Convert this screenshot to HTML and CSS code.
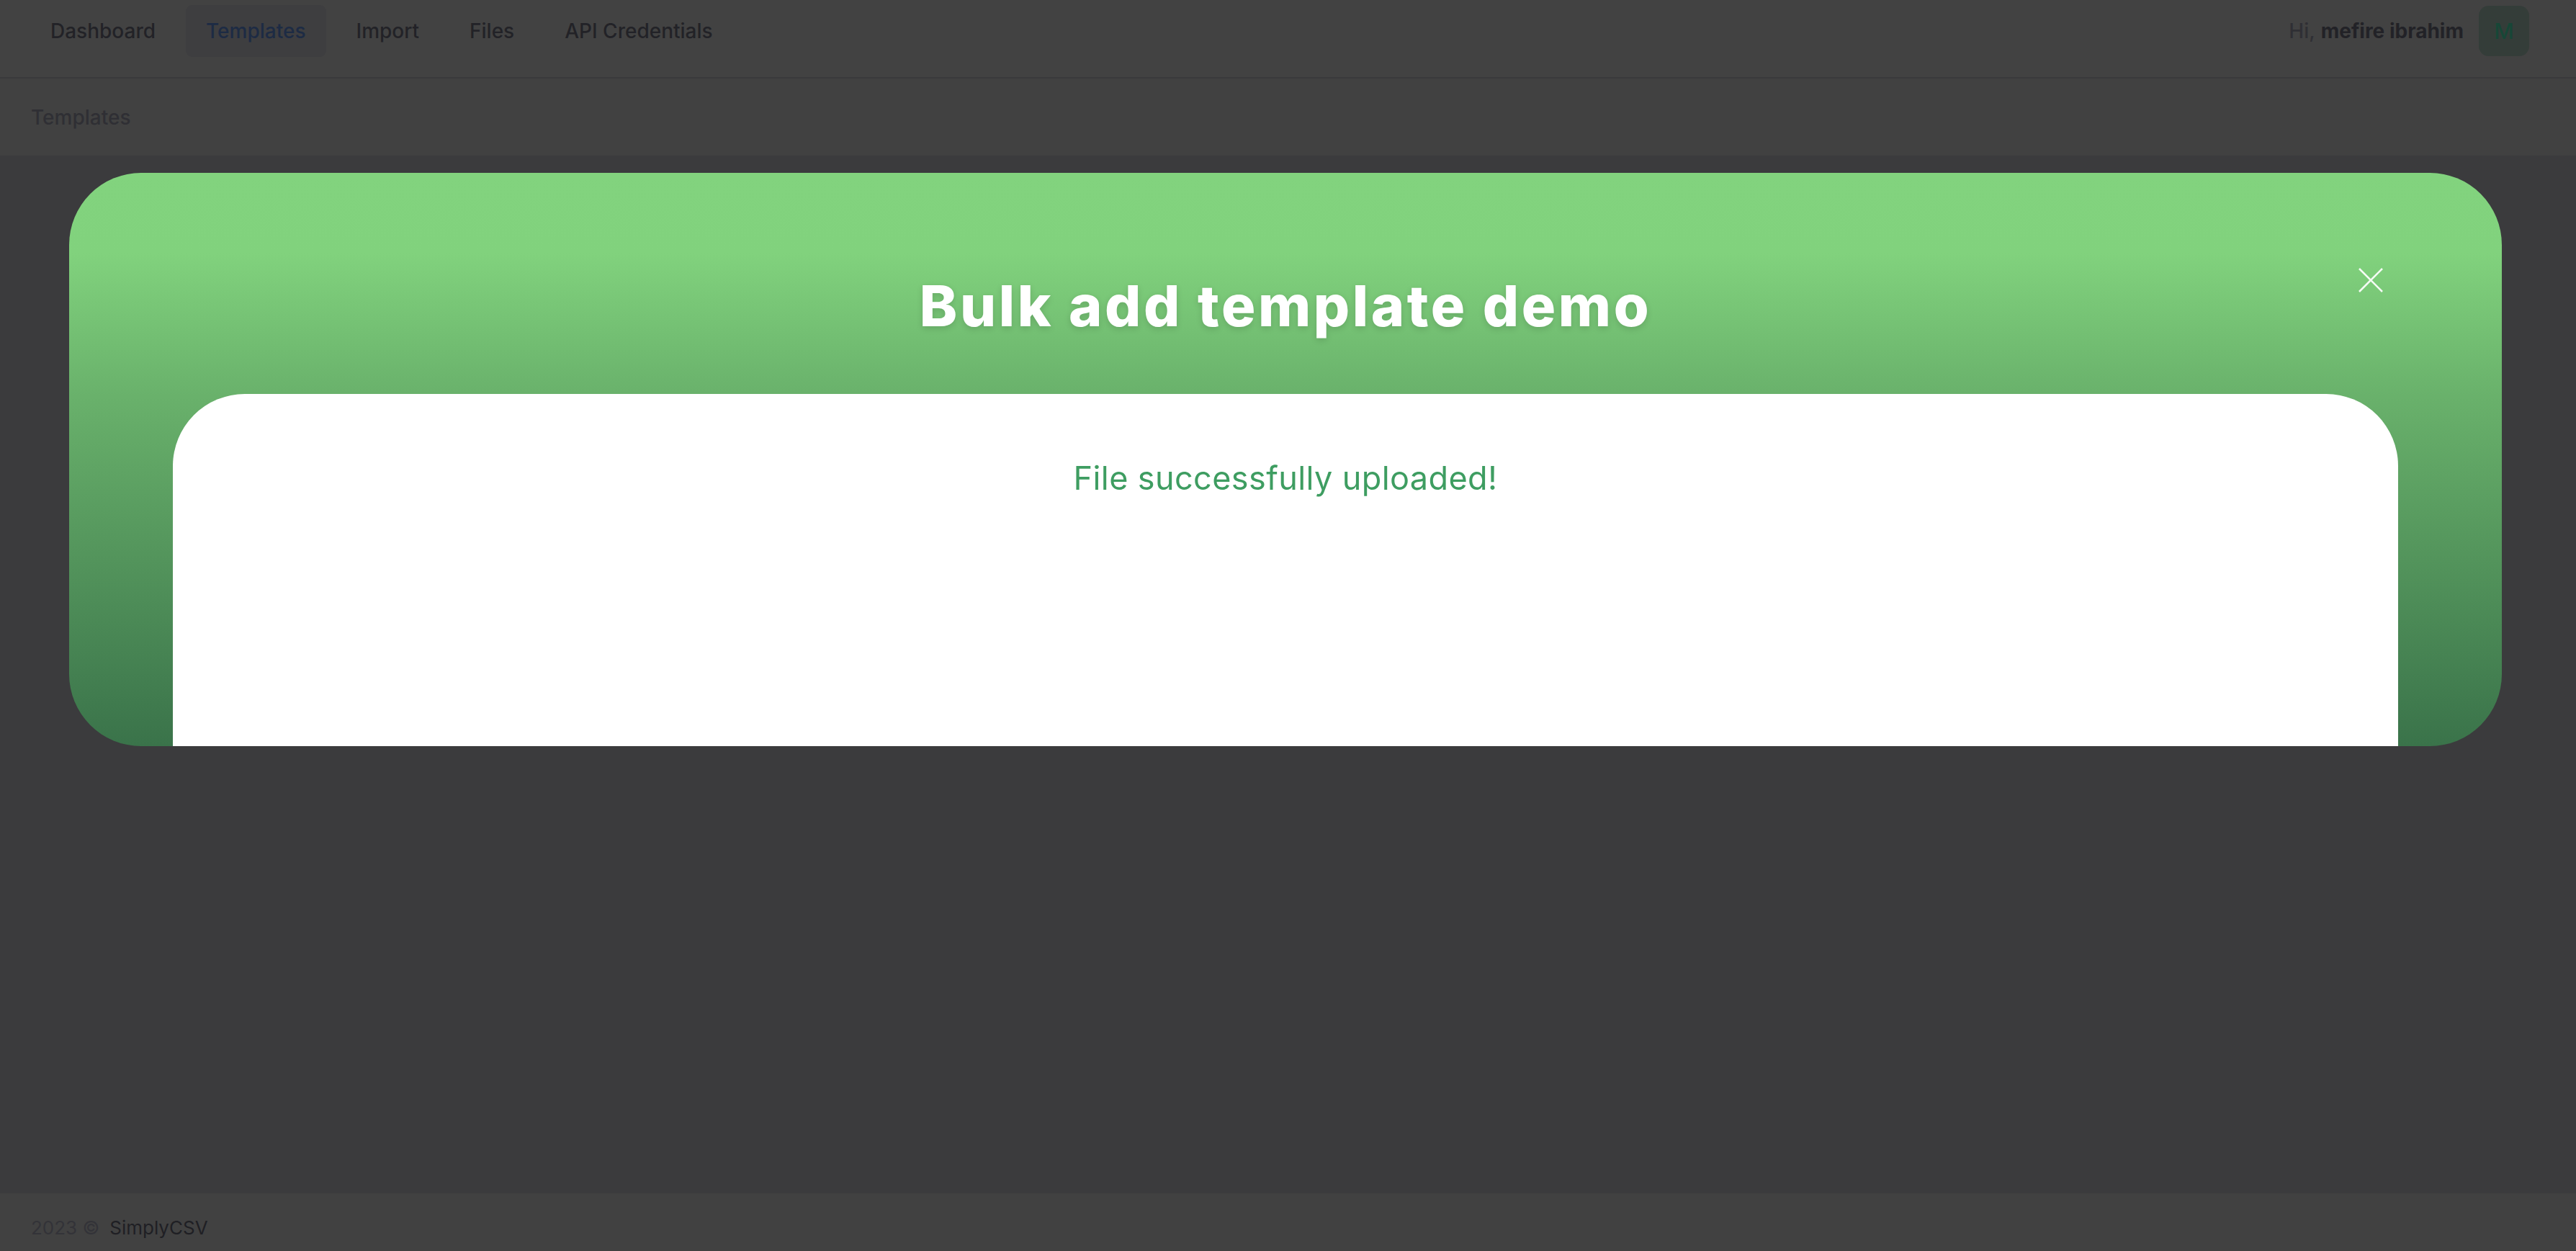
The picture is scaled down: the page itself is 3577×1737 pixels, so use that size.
FILE: index.html
```html
<!DOCTYPE html>
<html lang="en">
<head>
<meta charset="utf-8">
<title>Templates - SimplyCSV</title>
<link rel="stylesheet" href="styles.css">
</head>
<body>
  <header class="topbar">
    <nav class="menu">
      <a class="menu-item">Dashboard</a>
      <a class="menu-item active">Templates</a>
      <a class="menu-item">Import</a>
      <a class="menu-item">Files</a>
      <a class="menu-item">API Credentials</a>
    </nav>
    <div class="user">
      <span class="hi">Hi,</span>
      <span class="username">mefire ibrahim</span>
      <span class="avatar">M</span>
    </div>
  </header>
  <div class="subheader">
    <h2 class="page-title">Templates</h2>
  </div>
  <main class="content"></main>
  <footer class="footer">
    <span class="year">2023 ©</span>
    <span class="brand">SimplyCSV</span>
  </footer>

  <div class="overlay">
    <div class="modal">
      <div class="modal-head">
        <h1 class="modal-title">Bulk add template demo</h1>
        <button class="close" aria-label="Close">
          <svg viewBox="0 0 34 34" width="34" height="34">
            <path d="M1 1 L33 33 M33 1 L1 33" stroke="#ffffff" stroke-width="2.6" fill="none" stroke-linecap="butt"/>
          </svg>
        </button>
      </div>
      <div class="modal-body">
        <p class="success">File successfully uploaded!</p>
      </div>
    </div>
  </div>
</body>
</html>
```

FILE: styles.css
```css
* { box-sizing: border-box; }

html, body {
  margin: 0;
  padding: 0;
  height: 100%;
  overflow: hidden;
}

body {
  font-family: Inter, "Noto Sans", sans-serif;
  background: #3b3b3d;
  display: flex;
  flex-direction: column;
  min-height: 100vh;
}

.topbar {
  height: 109px;
  background: #424242;
  border-bottom: 2px solid #3a3a3c;
  display: flex;
  justify-content: space-between;
  align-items: flex-start;
  padding: 7px 65px 0 42px;
}

.menu {
  display: flex;
  gap: 14px;
}

.menu-item {
  display: block;
  height: 72px;
  line-height: 72px;
  padding: 0 28px;
  border-radius: 9px;
  font-size: 28px;
  font-weight: 500;
  color: #222227;
}

.menu-item.active {
  background: #3e3e40;
  color: #1d2b44;
}

.user {
  display: flex;
  align-items: center;
  height: 72px;
  font-size: 28px;
}

.hi {
  color: #2f2f34;
  font-weight: 500;
  margin-right: 8px;
}

.username {
  color: #222227;
  font-weight: 700;
}

.avatar {
  margin-left: 21px;
  width: 70px;
  height: 70px;
  border-radius: 14px;
  background: #343d39;
  color: #174737;
  font-size: 30px;
  font-weight: 500;
  display: flex;
  align-items: center;
  justify-content: center;
}

.subheader {
  height: 107px;
  background: #414141;
  display: flex;
  align-items: center;
  padding-left: 43px;
}

.page-title {
  margin: 0;
  font-size: 28px;
  font-weight: 500;
  color: #2f2f34;
}

.content {
  flex: 1;
  background: #3b3b3d;
}

.footer {
  height: 80px;
  background: #414141;
  padding: 15px 0 0 43px;
  display: flex;
  align-items: center;
  font-size: 26px;
}

.year {
  color: #333338;
  margin-right: 14px;
}

.brand {
  color: #1f1f24;
}

/* modal */
.overlay {
  position: fixed;
  inset: 0;
  padding: 240px 103px 0 96px;
}

.modal {
  position: relative;
  height: 796px;
  border-radius: 100px;
  overflow: hidden;
  background: linear-gradient(to bottom, #82d37e 0%, #81d27d 14%, #69b16b 39%, #3a734a 100%);
  padding: 0 144px;
  display: flex;
  flex-direction: column;
}

.modal-head {
  height: 307px;
  padding-top: 136px;
  text-align: center;
}

.modal-title {
  margin: 0;
  font-size: 79px;
  font-weight: 800;
  color: #ffffff;
  letter-spacing: 3.6px;
  text-shadow: 0 3px 10px rgba(0, 0, 0, 0.14);
}

.close {
  position: absolute;
  top: 132px;
  right: 165px;
  width: 34px;
  height: 34px;
  padding: 0;
  border: 0;
  background: none;
  display: block;
  opacity: 0.92;
}

.close svg { display: block; }

.modal-body {
  flex: 1;
  background: #ffffff;
  border-radius: 100px 100px 0 0;
  text-align: center;
  padding-top: 89px;
}

.success {
  margin: 0;
  font-size: 45px;
  font-weight: 400;
  color: #3e9d61;
  letter-spacing: 0.4px;
}
```
